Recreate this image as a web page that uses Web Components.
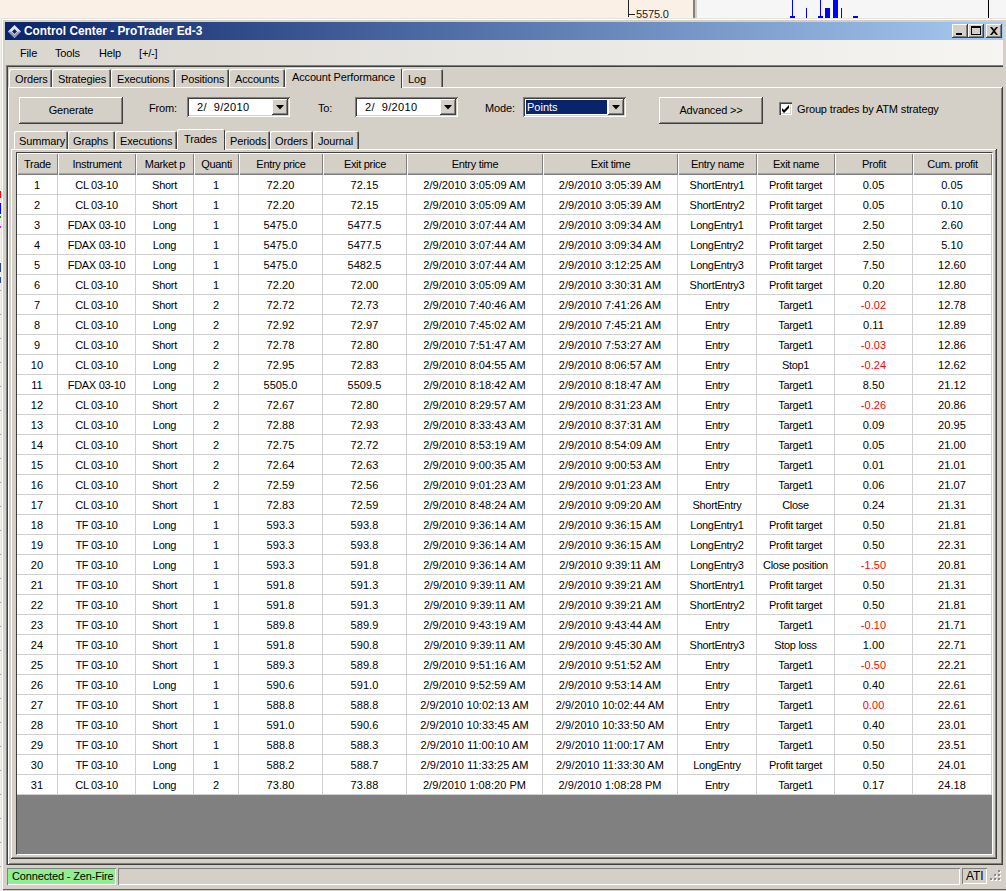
<!DOCTYPE html>
<html>
<head>
<meta charset="utf-8">
<title>Control Center</title>
<style>
    html, body { margin:0; padding:0; overflow:hidden; }
    body { font:11px "Liberation Sans", Arial, sans-serif; color:#000; letter-spacing:-0.15px; }
</style>
</head>
<body>
<desk-top>
    <chart-backdrop></chart-backdrop>
    <cc-window>
        <cc-titlebar>Control Center - ProTrader Ed-3</cc-titlebar>
        <cc-menubar>
            <span style="width:35px">File</span>
            <span style="width:44px">Tools</span>
            <span style="width:40px">Help</span>
            <span>[+/-]</span>
        </cc-menubar>
        <cc-tabs frame style="--active-h:20px;--active-pad:2px;--strip-indent:1px;--tab-pad:6px">
            <cc-tab slot="tabs" w="43">Orders</cc-tab>
            <cc-tab slot="tabs" w="59">Strategies</cc-tab>
            <cc-tab slot="tabs" w="64">Executions</cc-tab>
            <cc-tab slot="tabs" w="54">Positions</cc-tab>
            <cc-tab slot="tabs" w="56">Accounts</cc-tab>
            <cc-tab slot="tabs" w="117" active>Account Performance</cc-tab>
            <cc-tab slot="tabs" w="41">Log</cc-tab>

            <cc-toolbar>
                <cc-button style="margin-left:10px">Generate</cc-button>
                <cc-label style="margin-left:26px;width:38px">From:</cc-label>
                <cc-combo>2/  9/2010</cc-combo>
                <cc-label style="margin-left:28px;width:37px">To:</cc-label>
                <cc-combo>2/  9/2010</cc-combo>
                <cc-label style="margin-left:27px;width:38px">Mode:</cc-label>
                <cc-combo selected>Points</cc-combo>
                <cc-button style="margin-left:33px">Advanced &gt;&gt;</cc-button>
                <cc-check style="margin-left:16px">Group trades by ATM strategy</cc-check>
            </cc-toolbar>

            <cc-tabs inner style="--active-h:21px;--active-pad:3px;--strip-indent:3px;--tab-pad:5px">
                <cc-tab slot="tabs" w="54">Summary</cc-tab>
                <cc-tab slot="tabs" w="47">Graphs</cc-tab>
                <cc-tab slot="tabs" w="62">Executions</cc-tab>
                <cc-tab slot="tabs" w="48" active>Trades</cc-tab>
                <cc-tab slot="tabs" w="45">Periods</cc-tab>
                <cc-tab slot="tabs" w="43">Orders</cc-tab>
                <cc-tab slot="tabs" w="46">Journal</cc-tab>
                <trade-grid></trade-grid>
            </cc-tabs>
        </cc-tabs>
        <cc-statusbar></cc-statusbar>
    </cc-window>
</desk-top>

<script>
const RAISED = 'box-shadow:inset -1px -1px #404040, inset 1px 1px #fff, inset -2px -2px #808080;';
const FACE = '#d4d0c8';

class DeskTop extends HTMLElement {
    constructor(){
        super();
        this.attachShadow({mode:'open'});
    }
    connectedCallback(){
        this.shadowRoot.innerHTML = `
            <style>
                :host{ display:block; position:relative; width:1006px; height:891px; overflow:hidden; background:#faf0e6; }
            </style>
            <slot></slot>
        `;
    }
}

// the chart windows that stick out behind the control center
class ChartBackdrop extends HTMLElement {
    constructor(){
        super();
        this.attachShadow({mode:'open'});
    }
    connectedCallback(){
        const bars = [[792,1,0,16],[790,5,16,2],[806,1,8,10],[820,1,0,16],[818,5,16,2],[825,5,8,10],[833,5,0,18],[841,1,8,10],[853,5,16,2]]
            .map(b => `<rect x="${b[0]}" width="${b[1]}" y="${b[2]}" height="${b[3]}" fill="#0000ff"/>`).join('');
        const marks = [[191,7,'#ff0000'],[203,11,'#0000ff'],[216,2,'#00a000'],[226,2,'#ff00ff'],[263,9,'#2a4a8a'],[277,6,'#2a4a8a']]
            .map(m => `<rect x="0" width="1" y="${m[0]}" height="${m[1]}" fill="${m[2]}"/>`).join('');
        let ticks = '';
        for(let y = 290; y < 880; y += 24){
            ticks += `<rect x="0" width="1" y="${y}" height="1" fill="#a0a0a0"/>`;
        }
        this.shadowRoot.innerHTML = `
            <style>
                :host{ position:absolute; left:0; top:0; width:1006px; height:891px; }
                svg{ position:absolute; left:0; top:0; }
                span{ position:absolute; left:636px; top:8px; font-size:11px; line-height:13px; color:#222; }
            </style>
            <svg width="1006" height="891">
                <rect x="693" y="0" width="2" height="18" fill="#808080"/>
                <rect x="695" y="0" width="2" height="18" fill="#d4d0c8"/>
                <rect x="697" y="0" width="309" height="18" fill="#f6f6f6"/>
                <rect x="628" y="0" width="1" height="17" fill="#222"/>
                <rect x="628" y="14" width="7" height="1" fill="#222"/>
                <rect x="988" y="0" width="1" height="18" fill="#000"/>
                <rect x="0" y="18" width="1" height="873" fill="#f4efe6"/>
                ${bars}${marks}${ticks}
            </svg>
            <span>5575.0</span>
        `;
    }
}

class CcWindow extends HTMLElement {
    constructor(){
        super();
        this.attachShadow({mode:'open'});
    }
    connectedCallback(){
        this.shadowRoot.innerHTML = `
            <style>
                :host{
                    position:absolute; left:1px; top:18px; width:1005px; height:873px;
                    box-sizing:border-box; display:flex; flex-direction:column;
                    padding:4px 3px 2px 4px;
                    background:${FACE};
                    box-shadow:inset 1px 1px #e6e3dd, inset 2px 2px #fff, inset 0 -1px #d4d0c8, inset 0 -2px #606060;
                }
            </style>
            <slot></slot>
        `;
    }
}

class CcTitlebar extends HTMLElement {
    constructor(){
        super();
        this.attachShadow({mode:'open'});
    }
    connectedCallback(){
        const style = `
            <style>
                :host{
                    display:flex; align-items:center; flex:none; height:18px; padding-left:3px;
                    background:linear-gradient(to right,#0a246a,#a6caf0);
                    color:#fff; font-weight:bold; font-size:11.85px; letter-spacing:0;
                }
                .logo{ margin-right:3px; flex:none; }
                .text{ flex:1; white-space:nowrap; }
                .btn{ width:16px; height:14px; flex:none; background:${FACE}; ${RAISED} }
                .btn svg{ display:block; }
                .close{ margin:0 1px 0 2px; }
            </style>
        `;
        const template = `
            <svg class="logo" width="13" height="13" viewBox="0 0 13 13">
                <polygon points="6.5,0 13,6.5 6.5,13 0,6.5" fill="#e4e6ee"/>
                <polygon points="13,6.5 6.5,13 0,6.5 3,6.5 6.5,10 10,6.5" fill="#8d95b3"/>
                <polygon points="6.5,4 9,6.5 6.5,9 4,6.5" fill="#0a246a"/>
            </svg>
            <span class="text"><slot></slot></span>
            <div class="btn"><svg width="16" height="14"><rect x="4" y="9" width="6" height="2" fill="#000"/></svg></div>
            <div class="btn"><svg width="16" height="14"><rect x="3.5" y="2.5" width="9" height="8" fill="none" stroke="#000"/><rect x="3" y="2" width="10" height="2" fill="#000"/></svg></div>
            <div class="btn close"><svg width="16" height="14"><path d="M4 3l2 0 2 2.5 2-2.5 2 0-3 4 3 4-2 0-2-2.5-2 2.5-2 0 3-4z" fill="#000"/></svg></div>
        `;
        this.shadowRoot.innerHTML = style + template;
    }
}

class CcMenubar extends HTMLElement {
    constructor(){
        super();
        this.attachShadow({mode:'open'});
    }
    connectedCallback(){
        this.shadowRoot.innerHTML = `
            <style>
                :host{
                    display:flex; align-items:center; flex:none; height:25px; padding-left:15px;
                    background:linear-gradient(to right,#d9d6ce,#f6f5f2);
                }
                ::slotted(span){ display:block; }
            </style>
            <slot></slot>
        `;
    }
}

class CcTabs extends HTMLElement {
    constructor(){
        super();
        this.attachShadow({mode:'open'});
    }
    connectedCallback(){
        const style = `
            <style>
                :host{ display:flex; flex-direction:column; flex:1; min-height:0; }
                :host([frame]){
                    margin-left:1px; padding:2px 0 0 2px;
                    box-shadow:inset 1px 1px #808080, inset 2px 2px #404040;
                }
                :host([inner]){ margin:5px 4px 4px 2px; }
                .strip{
                    display:flex; align-items:flex-end; flex:none; height:20px;
                    padding-left:var(--strip-indent); position:relative; z-index:1;
                }
                .panel{
                    flex:1; min-height:0; display:flex; flex-direction:column;
                    box-shadow:inset -1px -1px #404040, inset 1px 1px #fff, inset -2px -2px #808080;
                    background:${FACE};
                }
                :host([frame]) .panel{ padding:1px 2px 2px 1px; }
                :host([inner]) .panel{ padding:3px 4px 4px 5px; }
            </style>
        `;
        const template = `
            <div class="strip"><slot name="tabs"></slot></div>
            <div class="panel"><slot></slot></div>
        `;
        this.shadowRoot.innerHTML = style + template;
    }
}

class CcTab extends HTMLElement {
    constructor(){
        super();
        this.attachShadow({mode:'open'});
    }
    connectedCallback(){
        this.shadowRoot.innerHTML = `
            <style>
                :host{
                    display:block; flex:none; box-sizing:border-box; height:18px;
                    width:${this.getAttribute('w')}px; padding:3px 0 0 var(--tab-pad);
                    line-height:15px; white-space:nowrap; overflow:hidden;
                    background:${FACE}; border-radius:2px 2px 0 0;
                    box-shadow:inset 1px 1px #fff, inset -1px 0 #404040, inset -2px 0 #808080;
                }
                :host([active]){
                    height:var(--active-h); margin-bottom:-1px; position:relative;
                    padding:var(--active-pad) 0 0 7px;
                    box-shadow:inset 1px 1px #fff, inset -1px 0 #404040;
                }
            </style>
            <slot></slot>
        `;
    }
}

class CcToolbar extends HTMLElement {
    constructor(){
        super();
        this.attachShadow({mode:'open'});
    }
    connectedCallback(){
        this.shadowRoot.innerHTML = `
            <style>
                :host{ display:flex; align-items:flex-start; flex:none; height:27px; padding-top:9px; }
            </style>
            <slot></slot>
        `;
    }
}

class CcButton extends HTMLElement {
    constructor(){
        super();
        this.attachShadow({mode:'open'});
    }
    connectedCallback(){
        this.shadowRoot.innerHTML = `
            <style>
                :host{
                    display:flex; align-items:center; justify-content:center; flex:none; box-sizing:border-box;
                    width:104px; height:27px; padding-bottom:1px; background:${FACE}; ${RAISED}
                }
            </style>
            <slot></slot>
        `;
    }
}

class CcLabel extends HTMLElement {
    constructor(){
        super();
        this.attachShadow({mode:'open'});
    }
    connectedCallback(){
        this.shadowRoot.innerHTML = `
            <style>
                :host{ display:flex; align-items:center; flex:none; height:22px; }
            </style>
            <slot></slot>
        `;
    }
}

class CcCombo extends HTMLElement {
    constructor(){
        super();
        this.attachShadow({mode:'open'});
    }
    connectedCallback(){
        const style = `
            <style>
                :host{
                    display:flex; flex:none; box-sizing:border-box; width:103px; height:20px; padding:2px;
                    background:#fff;
                    box-shadow:inset 1px 1px #808080, inset -1px -1px #fff, inset 2px 2px #404040, inset -2px -2px ${FACE};
                }
                .value{ flex:1; display:flex; align-items:center; padding-left:8px; white-space:pre; letter-spacing:0.35px; }
                :host([selected]) .value{ background:#0a246a; color:#fff; margin:1px; padding-left:1px; letter-spacing:0; }
                .drop{ width:16px; flex:none; display:flex; align-items:center; justify-content:center; background:${FACE}; ${RAISED} }
            </style>
        `;
        const template = `
            <div class="value"><slot></slot></div>
            <div class="drop"><svg width="8" height="5"><polygon points="0,0 8,0 4,4.5" fill="#000"/></svg></div>
        `;
        this.shadowRoot.innerHTML = style + template;
    }
}

class CcCheck extends HTMLElement {
    constructor(){
        super();
        this.attachShadow({mode:'open'});
    }
    connectedCallback(){
        this.shadowRoot.innerHTML = `
            <style>
                :host{ display:flex; align-items:center; flex:none; height:13px; margin-top:5px; white-space:nowrap; }
                .box{
                    width:13px; height:13px; margin-right:5px; background:#fff; flex:none;
                    box-shadow:inset 1px 1px #808080, inset 2px 2px #404040, inset -1px -1px #fff, inset -2px -2px ${FACE};
                }
                svg{ display:block; }
            </style>
            <div class="box"><svg width="13" height="13"><path d="M3 6l0 3 2 2 5-5 0-3-5 5z" fill="#000"/></svg></div>
            <slot></slot>
        `;
    }
}

class TradeGrid extends HTMLElement {
    constructor(){
        super();
        this.attachShadow({mode:'open'});
    }
    connectedCallback(){
        const columns = [41,78,58,45,84,84,136,135,79,78,78,79];
        const heads = ['Trade','Instrument','Market p','Quanti','Entry price','Exit price','Entry time','Exit time','Entry name','Exit name','Profit','Cum. profit'];
        // trade, instrument, side, qty, entry, exit, entry time, exit time, entry name, exit name, profit, cum
        const data = `
            CL|Short|1|72.20|72.15|3:05:09 AM|3:05:39 AM|ShortEntry1|PT|0.05|0.05
            CL|Short|1|72.20|72.15|3:05:09 AM|3:05:39 AM|ShortEntry2|PT|0.05|0.10
            FDAX|Long|1|5475.0|5477.5|3:07:44 AM|3:09:34 AM|LongEntry1|PT|2.50|2.60
            FDAX|Long|1|5475.0|5477.5|3:07:44 AM|3:09:34 AM|LongEntry2|PT|2.50|5.10
            FDAX|Long|1|5475.0|5482.5|3:07:44 AM|3:12:25 AM|LongEntry3|PT|7.50|12.60
            CL|Short|1|72.20|72.00|3:05:09 AM|3:30:31 AM|ShortEntry3|PT|0.20|12.80
            CL|Short|2|72.72|72.73|7:40:46 AM|7:41:26 AM|Entry|Target1|-0.02|12.78
            CL|Long|2|72.92|72.97|7:45:02 AM|7:45:21 AM|Entry|Target1|0.11|12.89
            CL|Short|2|72.78|72.80|7:51:47 AM|7:53:27 AM|Entry|Target1|-0.03|12.86
            CL|Long|2|72.95|72.83|8:04:55 AM|8:06:57 AM|Entry|Stop1|-0.24|12.62
            FDAX|Long|2|5505.0|5509.5|8:18:42 AM|8:18:47 AM|Entry|Target1|8.50|21.12
            CL|Short|2|72.67|72.80|8:29:57 AM|8:31:23 AM|Entry|Target1|-0.26|20.86
            CL|Long|2|72.88|72.93|8:33:43 AM|8:37:31 AM|Entry|Target1|0.09|20.95
            CL|Short|2|72.75|72.72|8:53:19 AM|8:54:09 AM|Entry|Target1|0.05|21.00
            CL|Short|2|72.64|72.63|9:00:35 AM|9:00:53 AM|Entry|Target1|0.01|21.01
            CL|Short|2|72.59|72.56|9:01:23 AM|9:01:23 AM|Entry|Target1|0.06|21.07
            CL|Short|1|72.83|72.59|8:48:24 AM|9:09:20 AM|ShortEntry|Close|0.24|21.31
            TF|Long|1|593.3|593.8|9:36:14 AM|9:36:15 AM|LongEntry1|PT|0.50|21.81
            TF|Long|1|593.3|593.8|9:36:14 AM|9:36:15 AM|LongEntry2|PT|0.50|22.31
            TF|Long|1|593.3|591.8|9:36:14 AM|9:39:11 AM|LongEntry3|Close position|-1.50|20.81
            TF|Short|1|591.8|591.3|9:39:11 AM|9:39:21 AM|ShortEntry1|PT|0.50|21.31
            TF|Short|1|591.8|591.3|9:39:11 AM|9:39:21 AM|ShortEntry2|PT|0.50|21.81
            TF|Short|1|589.8|589.9|9:43:19 AM|9:43:44 AM|Entry|Target1|-0.10|21.71
            TF|Short|1|591.8|590.8|9:39:11 AM|9:45:30 AM|ShortEntry3|Stop loss|1.00|22.71
            TF|Short|1|589.3|589.8|9:51:16 AM|9:51:52 AM|Entry|Target1|-0.50|22.21
            TF|Long|1|590.6|591.0|9:52:59 AM|9:53:14 AM|Entry|Target1|0.40|22.61
            TF|Short|1|588.8|588.8|10:02:13 AM|10:02:44 AM|Entry|Target1|!0.00|22.61
            TF|Short|1|591.0|590.6|10:33:45 AM|10:33:50 AM|Entry|Target1|0.40|23.01
            TF|Short|1|588.8|588.3|11:00:10 AM|11:00:17 AM|Entry|Target1|0.50|23.51
            TF|Long|1|588.2|588.7|11:33:25 AM|11:33:30 AM|LongEntry|PT|0.50|24.01
            CL|Long|2|73.80|73.88|1:08:20 PM|1:08:28 PM|Entry|Target1|0.17|24.18
        `.trim().split('\n');

        const tight = [1,2,8,9];
        const cells = data.map((line, i) => {
            const f = line.trim().split('|');
            const profit = f[9];
            const red = profit[0] === '-' || profit[0] === '!';
            const row = [
                i + 1, f[0] + ' 03-10', f[1], f[2], f[3], f[4],
                '2/9/2010 ' + f[5], '2/9/2010 ' + f[6], f[7],
                f[8] === 'PT' ? 'Profit target' : f[8],
                profit.replace('!', ''), f[10]
            ];
            return row.map((v, c) => {
                const cls = 'cell' + (c === 10 && red ? ' red' : '') + (tight.includes(c) ? ' tight' : '');
                return `<div class="${cls}">${v}</div>`;
            }).join('');
        }).join('');

        const style = `
            <style>
                :host{
                    display:block; flex:1; min-height:0; background:#808080; overflow:hidden;
                    border-style:solid; border-width:1px; border-color:#404040 #fff #fff #404040;
                }
                .grid{ display:grid; grid-template-columns:${columns.map(c => c + 'px').join(' ')}; }
                .head{
                    height:22px; box-sizing:border-box; padding-top:4px; line-height:15px; text-align:center;
                    background:${FACE}; white-space:nowrap; overflow:hidden; letter-spacing:-0.3px;
                    box-shadow:inset 1px 1px #fff, inset -1px -1px #808080, inset 0 -2px #a8a59e;
                }
                .cell{
                    height:20px; box-sizing:border-box; line-height:20px; text-align:center;
                    background:#fff; white-space:nowrap; letter-spacing:0.05px;
                    border-right:1px solid #d0d0d0; border-bottom:1px solid #d0d0d0;
                }
                .tight{ letter-spacing:-0.3px; }
                .red{ color:#ff0000; }
            </style>
        `;
        const template = `
            <div class="grid">
                ${heads.map(h => `<div class="head">${h}</div>`).join('')}
                ${cells}
            </div>
        `;
        this.shadowRoot.innerHTML = style + template;
    }
}

class CcStatusbar extends HTMLElement {
    constructor(){
        super();
        this.attachShadow({mode:'open'});
    }
    connectedCallback(){
        const style = `
            <style>
                :host{ display:flex; flex:none; height:18px; margin:3px 0 3px; padding-left:2px; gap:2px; }
                .pane{ box-sizing:border-box; height:17px; line-height:17px; white-space:nowrap; box-shadow:inset 1px 1px #808080, inset -1px -1px #fff; }
                .conn{ width:109px; background:#90ee90; padding-left:5px; }
                .fill{ flex:1; }
                .ati{ width:25px; padding-left:4px; height:16px; line-height:16px; font-size:12px; }
                svg{ flex:none; margin-left:-1px; }
            </style>
        `;
        const dots = [[10,2],[6,6],[10,6],[2,10],[6,10],[10,10]]
            .map(d => `<rect x="${d[0]+1}" y="${d[1]+1}" width="2" height="2" fill="#fff"/><rect x="${d[0]}" y="${d[1]}" width="2" height="2" fill="#8a8a8a"/>`).join('');
        const template = `
            <div class="pane conn">Connected - Zen-Fire</div>
            <div class="pane fill"></div>
            <div class="pane ati">ATI</div>
            <svg width="15" height="18">${dots}</svg>
        `;
        this.shadowRoot.innerHTML = style + template;
    }
}

customElements.define('desk-top', DeskTop);
customElements.define('chart-backdrop', ChartBackdrop);
customElements.define('cc-window', CcWindow);
customElements.define('cc-titlebar', CcTitlebar);
customElements.define('cc-menubar', CcMenubar);
customElements.define('cc-tabs', CcTabs);
customElements.define('cc-tab', CcTab);
customElements.define('cc-toolbar', CcToolbar);
customElements.define('cc-button', CcButton);
customElements.define('cc-label', CcLabel);
customElements.define('cc-combo', CcCombo);
customElements.define('cc-check', CcCheck);
customElements.define('trade-grid', TradeGrid);
customElements.define('cc-statusbar', CcStatusbar);
</script>
</body>
</html>
